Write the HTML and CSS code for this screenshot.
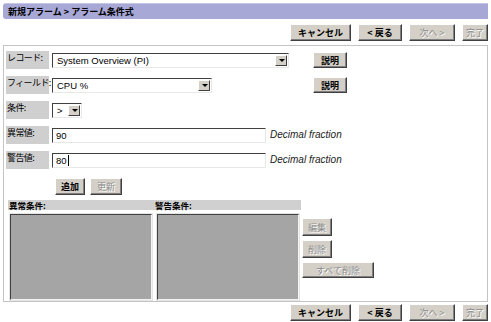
FILE: index.html
```html
<!DOCTYPE html>
<html lang="ja">
<head>
    <meta charset="UTF-8">
    <title>新規アラーム &gt; アラーム条件式</title>
    <link rel="stylesheet" href="styles.css">
</head>
<body>
    <div class="title">新規アラーム &gt; アラーム条件式</div>

    <div class="nav">
        <span class="btn w-cancel">キャンセル</span>
        <span class="btn w-back">&lt; 戻る</span>
        <span class="btn w-next disabled">次へ &gt;</span>
        <span class="btn w-done disabled">完了</span>
    </div>

    <div class="panel">
        <div class="row">
            <div class="label">レコード:</div>
            <div class="cell">
                <div class="select w-record"><span>System Overview (PI)</span><i class="arrow"></i></div>
            </div>
            <span class="btn w-help">説明</span>
        </div>
        <div class="row">
            <div class="label">フィールド:</div>
            <div class="cell">
                <div class="select w-field"><span>CPU %</span><i class="arrow"></i></div>
            </div>
            <span class="btn w-help">説明</span>
        </div>
        <div class="row">
            <div class="label">条件:</div>
            <div class="select w-cond"><span>&gt;</span><i class="arrow"></i></div>
        </div>
        <div class="row">
            <div class="label">異常値:</div>
            <div class="input">90</div>
            <span class="hint">Decimal fraction</span>
        </div>
        <div class="row">
            <div class="label">警告値:</div>
            <div class="input">80<i class="caret"></i></div>
            <span class="hint">Decimal fraction</span>
        </div>
        <div class="row actions">
            <span class="btn w-add">追加</span>
            <span class="btn w-update disabled">更新</span>
        </div>

        <div class="lists">
            <div class="list-head">
                <span>異常条件:</span>
                <span>警告条件:</span>
            </div>
            <div class="listbox"></div>
            <div class="listbox"></div>
            <div class="list-btns">
                <span class="btn w-edit disabled">編集</span>
                <span class="btn w-edit disabled">削除</span>
                <span class="btn w-clear disabled">すべて削除</span>
            </div>
        </div>
    </div>

    <div class="nav bottom">
        <span class="btn w-cancel">キャンセル</span>
        <span class="btn w-back">&lt; 戻る</span>
        <span class="btn w-next disabled">次へ &gt;</span>
        <span class="btn w-done disabled">完了</span>
    </div>
</body>
</html>
```

FILE: styles.css
```css
* {
    margin: 0;
    padding: 0;
    box-sizing: border-box;
}

body {
    font-family: "Noto Sans CJK JP", "DejaVu Sans", sans-serif;
    font-size: 9px;
    color: #000;
    background: #fff;
    padding: 3px 3px 0;
    width: 491px;
}

.title {
    height: 16px;
    line-height: 15px;
    background: #a8a8d6;
    border-top: 1px solid #c4c4e4;
    border-radius: 3px 0 0 3px;
    padding-left: 5px;
    font-weight: bold;
}

/* Windows classic buttons */
.btn {
    display: inline-flex;
    align-items: center;
    justify-content: center;
    height: 17px;
    background: #d4d0c8;
    border: 1px solid;
    border-color: #fff #404040 #404040 #fff;
    box-shadow: inset -1px -1px 0 #808080;
    font-size: 9px;
    font-weight: bold;
    white-space: nowrap;
}

.btn.disabled {
    color: #8c8c8c;
    font-weight: normal;
    text-shadow: 1px 1px 0 #fff;
}

.w-cancel { width: 61px; }
.w-back { width: 44px; }
.w-next { width: 46px; }
.w-done { width: 26px; }
.w-help { width: 34px; height: 16px; margin-top: 1px; }
.w-add { width: 30px; }
.w-update { width: 32px; }
.w-edit { width: 30px; height: 18px; }
.w-clear { width: 72px; height: 16px; }

.nav {
    display: flex;
    justify-content: flex-end;
    gap: 7px;
    margin-top: 5px;
}

.nav.bottom {
    margin-top: 2px;
}

.panel {
    margin-top: 4px;
    border: 1px solid #c4c4c4;
    height: 257px;
    padding: 5px 0 0 2px;
}

.row {
    display: flex;
    align-items: flex-start;
    height: 18px;
    margin-bottom: 7px;
}

.label {
    width: 43px;
    height: 18px;
    background: #cfcfcf;
    padding: 0 1px;
    line-height: 14px;
    font-size: 9px;
    letter-spacing: -0.6px;
    margin-right: 3px;
    white-space: nowrap;
}

.cell {
    width: 261px;
}

.select,
.input {
    display: flex;
    align-items: center;
    height: 15px;
    margin-top: 2px;
    background: #fff;
    border: 1px solid;
    border-color: #404040 #e8e8e8 #e8e8e8 #404040;
    font-family: "Liberation Sans", Arial, sans-serif;
    font-size: 9.5px;
    padding-left: 4px;
}

.select span {
    flex: 1;
}

.arrow {
    width: 12px;
    height: 11px;
    margin-right: 1px;
    background: #d4d0c8;
    border: 1px solid;
    border-color: #fff #404040 #404040 #fff;
    position: relative;
}

.arrow::after {
    content: "";
    position: absolute;
    left: 3px;
    top: 3px;
    border: 3px solid transparent;
    border-top: 3px solid #000;
    border-bottom: 0;
}

.w-record { width: 237px; }
.w-field { width: 160px; }
.w-cond { width: 30px; }

.input {
    width: 214px;
    padding-left: 3px;
}

.caret {
    width: 1px;
    height: 11px;
    background: #000;
    margin-left: 1px;
}

.hint {
    font-family: "Liberation Sans", Arial, sans-serif;
    font-style: italic;
    font-size: 10px;
    color: #222;
    margin: 3px 0 0 4px;
}

.row.actions {
    padding-left: 49px;
    gap: 5px;
    margin-top: 9px;
    margin-bottom: 4px;
}

.lists {
    display: grid;
    grid-template-columns: 147px 146px auto;
    grid-template-rows: 10px 86px;
    row-gap: 4px;
    padding-left: 2px;
}

.list-head {
    grid-column: 1 / 3;
    grid-row: 1;
    display: flex;
    background: #d0d0d0;
    font-size: 8.5px;
    line-height: 10px;
    font-weight: bold;
}

.list-head span:first-child {
    width: 147px;
    padding-left: 1px;
}

.listbox {
    grid-row: 2;
    margin-left: 2px;
    width: 142px;
    background: #a5a5a5;
    border: 1px solid;
    border-color: #404040 #f4f4f4 #f4f4f4 #404040;
    box-shadow: 0 0 0 1px #e4e4e4;
}

.list-btns {
    grid-column: 3;
    grid-row: 2;
    display: flex;
    flex-direction: column;
    align-items: flex-start;
    gap: 4px;
    padding: 4px 0 0 1px;
}
```
